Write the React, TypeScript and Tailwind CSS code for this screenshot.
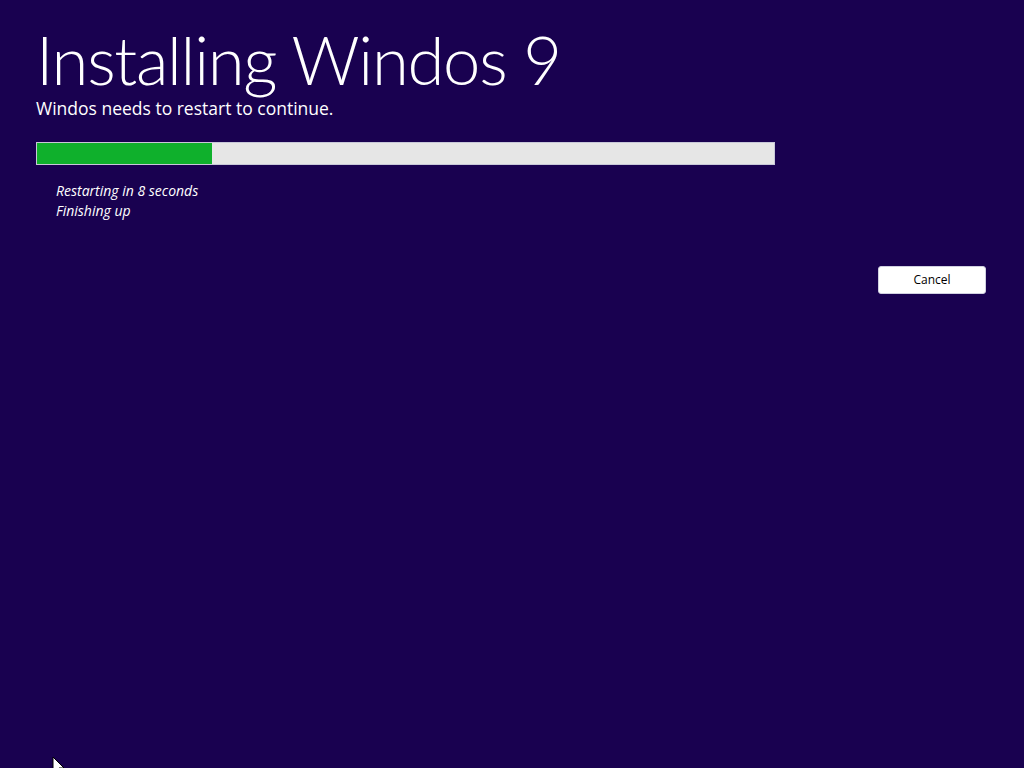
export default function App() {
  return (
    <div className="relative w-[1024px] h-[768px] overflow-hidden bg-[#190150] text-white" style={{ fontFamily: '"Open Sans", "Noto Sans", sans-serif' }}>
      <div className="pl-[36px] pt-[26px]">
        <h1 className="text-[67px] font-light leading-[66px] tracking-[-1.3px]" style={{ fontFamily: 'Lato, "Open Sans", sans-serif' }}>Installing Windos 9</h1>
        <p className="text-[17.5px] leading-[18px] mt-[7px]">Windos needs to restart to continue.</p>
        <div className="mt-[25px] w-[739px] h-[23px] bg-[#e6e6e6] border border-[#c8c8d8] flex">
          <div className="w-[175px] h-full bg-[#0fb02c]" />
        </div>
        <div className="pl-[20px] mt-[16px] italic text-[14px] leading-[20px]">
          <div>Restarting in 8 seconds</div>
          <div>Finishing up</div>
        </div>
      </div>
      <div className="absolute left-[878px] top-[266px] w-[108px] h-[28px] bg-white rounded-[3px] border border-[#d0d0e0] flex items-center justify-center text-[12px] text-black">
        Cancel
      </div>
      <svg className="absolute left-[52px] top-[756px]" width="14" height="20" viewBox="0 0 14 20">
        <path d="M1 1 L1 17 L5 13 L8 19 L10 18 L7 12 L12 12 Z" fill="white" stroke="black" strokeWidth="1" />
      </svg>
    </div>
  );
}
